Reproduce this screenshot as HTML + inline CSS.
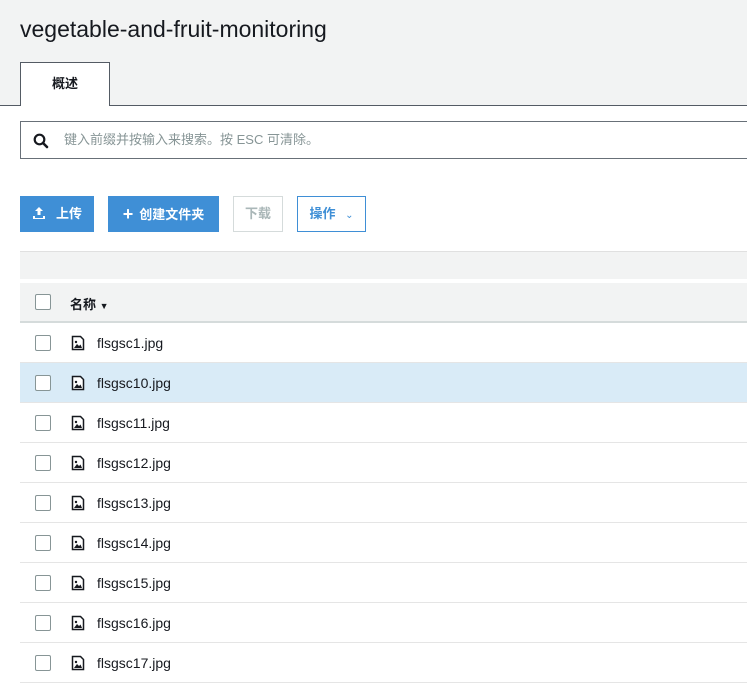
<!DOCTYPE html><html><head><meta charset="utf-8"><style>
*{margin:0;padding:0;box-sizing:border-box}
body{width:747px;height:681px;overflow:hidden;background:#fff;font-family:"Liberation Sans","Noto Sans CJK SC",sans-serif;color:#16191f;position:relative}
.hdr{position:absolute;left:0;top:0;width:747px;height:106px;background:#f2f3f3;border-bottom:1px solid #545b64}
h1{position:absolute;left:20px;top:16px;font-size:23px;font-weight:normal;color:#16191f}
.tab{position:absolute;left:20px;top:62px;width:90px;height:44px;background:#fff;border:1px solid #545b64;border-bottom:none;font-size:13px;font-weight:bold;text-align:center;line-height:42px}
.search{position:absolute;left:20px;top:121px;width:740px;height:38px;border:1px solid #687078;font-size:13px;color:#879596;line-height:36px;padding-left:43px}
.search svg{position:absolute;left:12px;top:11px}
.btn{position:absolute;top:196px;height:36px;font-size:13px;font-weight:bold;line-height:34px;text-align:center}
.p{background:#3f8fd6;color:#fff;border:1px solid #3f8fd6}
.table-top{position:absolute;left:20px;top:251px;width:727px;height:28px;background:#f2f3f3;border-top:1px solid #e0e0e0}
.th{position:absolute;left:20px;top:283px;width:727px;height:40px;background:#f2f3f3;border-bottom:2px solid #d5dbdb;font-size:13px;font-weight:bold}
.row{position:absolute;left:20px;width:727px;height:40px;border-bottom:1px solid #e5e5e5;font-size:14px}
.cb{position:absolute;left:15px;top:12px;width:16px;height:16px;border:1px solid #879596;border-radius:2px;background:#fff}
.nm{position:absolute;left:77px;top:12px}
.ic{position:absolute;left:51px;top:12px}
</style></head><body>
<div class="hdr"><h1>vegetable-and-fruit-monitoring</h1><div class="tab">概述</div></div>
<div class="search"><svg width="16" height="16" viewBox="0 0 16 16"><circle cx="6.5" cy="6.5" r="4.8" fill="none" stroke="#16191f" stroke-width="2.2"/><path d="M10 10l4 4" stroke="#16191f" stroke-width="2.6" stroke-linecap="round"/></svg>键入前缀并按输入来搜索。按 ESC 可清除。</div>
<div class="btn p" style="left:20px;width:74px"><svg width="14" height="14" viewBox="0 0 14 14" style="vertical-align:-2px;margin-right:10px"><path d="M7 1L3 5h2.5v4h3V5H11z M1 10h2v2h8v-2h2v3H1z" fill="#fff"/></svg>上传</div>
<div class="btn p" style="left:108px;width:111px"><span style="font-size:18px;vertical-align:-1px;margin-right:6px">+</span>创建文件夹</div>
<div class="btn" style="left:233px;width:50px;border:1px solid #d5dbdb;color:#aab7b8">下载</div>
<div class="btn" style="left:297px;width:69px;border:1px solid #3f8fd6;color:#3f8fd6">操作 <span style="font-weight:normal;font-size:10px;margin-left:6px">&#8964;</span></div>
<div class="table-top"></div>
<div class="th"><div class="cb" style="top:11px"></div><div class="nm" style="left:50px;top:11px">名称 <span style="font-size:9px">▼</span></div></div>
<div id="rows"></div>
<script>
var n=["flsgsc1.jpg","flsgsc10.jpg","flsgsc11.jpg","flsgsc12.jpg","flsgsc13.jpg","flsgsc14.jpg","flsgsc15.jpg","flsgsc16.jpg","flsgsc17.jpg"],h="";
n.forEach(function(t,i){h+='<div class="row" style="top:'+(323+i*40)+'px;'+(i==1?'background:#d9ebf7;':'')+'"><div class="cb"></div><svg class="ic" width="14" height="16" viewBox="0 0 14 16"><path d="M1.5 1.5h8l3 3v10h-11z" fill="#fff" stroke="#16191f" stroke-width="1.5"/><path d="M3 13l3-4 2 2 1.5-1.5L11 13z" fill="#16191f"/><circle cx="5" cy="7" r="1.2" fill="#16191f"/></svg><div class="nm">'+t+'</div></div>'});
document.getElementById("rows").innerHTML=h;
</script>
</body></html>
